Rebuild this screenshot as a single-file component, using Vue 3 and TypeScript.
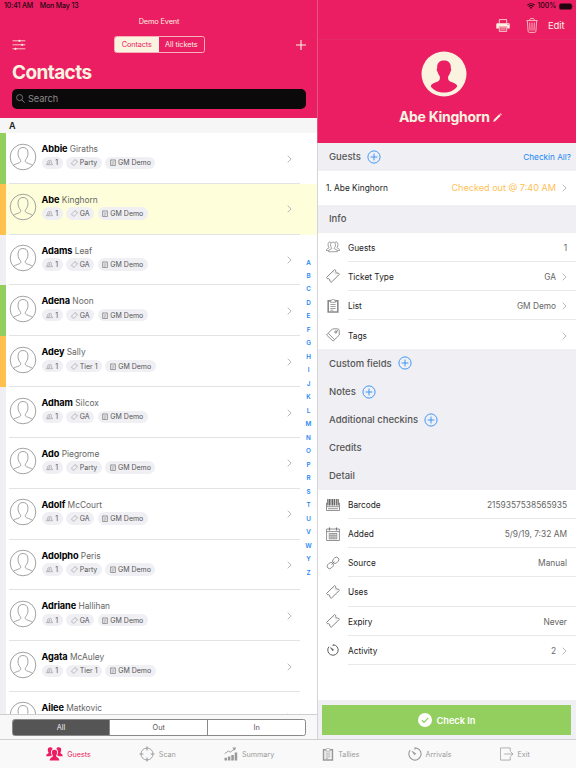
<script setup lang="ts">
interface Guest {
  first: string
  last: string
  ticket?: string
  state?: 'in' | 'out'
  selected?: boolean
}

interface Field {
  icon: string
  label: string
  value?: string
  more?: boolean
}

const guests: Guest[] = [
  { first: 'Abbie', last: 'Giraths', ticket: 'Party', state: 'in' },
  { first: 'Abe', last: 'Kinghorn', ticket: 'GA', state: 'out', selected: true },
  { first: 'Adams', last: 'Leaf', ticket: 'GA' },
  { first: 'Adena', last: 'Noon', ticket: 'GA', state: 'in' },
  { first: 'Adey', last: 'Sally', ticket: 'Tier 1', state: 'out' },
  { first: 'Adham', last: 'Silcox', ticket: 'GA' },
  { first: 'Ado', last: 'Piegrome', ticket: 'Party' },
  { first: 'Adolf', last: 'McCourt', ticket: 'GA' },
  { first: 'Adolpho', last: 'Peris', ticket: 'Party' },
  { first: 'Adriane', last: 'Hallihan', ticket: 'GA' },
  { first: 'Agata', last: 'McAuley', ticket: 'Tier 1' },
  { first: 'Ailee', last: 'Matkovic' },
]

const letters: string[] = 'ABCDEFGHIJKLMNOPRSTUVWYZ'.split('')

const info: Field[] = [
  { icon: 'group', label: 'Guests', value: '1' },
  { icon: 'ticket', label: 'Ticket Type', value: 'GA', more: true },
  { icon: 'clip', label: 'List', value: 'GM Demo', more: true },
  { icon: 'tag', label: 'Tags', more: true },
]

const sections: { title: string; add: boolean }[] = [
  { title: 'Custom fields', add: true },
  { title: 'Notes', add: true },
  { title: 'Additional checkins', add: true },
  { title: 'Credits', add: false },
  { title: 'Detail', add: false },
]

const detail: Field[] = [
  { icon: 'barcode', label: 'Barcode', value: '2159357538565935' },
  { icon: 'calendar', label: 'Added', value: '5/9/19, 7:32 AM' },
  { icon: 'link', label: 'Source', value: 'Manual' },
  { icon: 'ticket', label: 'Uses' },
  { icon: 'ticket', label: 'Expiry', value: 'Never' },
  { icon: 'timer', label: 'Activity', value: '2', more: true },
]

const tabs: { icon: string; label: string; active?: boolean }[] = [
  { icon: 'people', label: 'Guests', active: true },
  { icon: 'scan', label: 'Scan' },
  { icon: 'chart', label: 'Summary' },
  { icon: 'clip', label: 'Tallies' },
  { icon: 'timer', label: 'Arrivals' },
  { icon: 'exit', label: 'Exit' },
]
</script>

<template>
  <div class="screen">
    <svg class="defs" width="0" height="0">
      <symbol id="group" viewBox="0 0 16 14">
        <g fill="none" stroke="currentColor" stroke-width=".8" stroke-linejoin="round">
          <path d="M3 12.400h10c.2-1.800-.5-2.300-3.200-3.100-.5-.2-.4-1 0-1.500.9-1 1.100-2.200 1-3.600C10.700 2.500 9.600 1.500 8 1.500S5.300 2.500 5.200 4.200c-.1 1.400.1 2.600 1 3.600.4.500.5 1.300 0 1.500C3.500 10.100 2.800 10.600 3 12.400z" />
          <path d="M5.800 1.600C3.600.6 2.300 2 2.400 4c0 1.500 0 2.400.7 3.200.5.600.3 1-.4 1.300C1 9.100.5 9.500.5 11H3M10.200 1.600C12.400.6 13.700 2 13.600 4c0 1.500 0 2.400-.7 3.200-.5.600-.3 1 .4 1.300 1.700.6 2.200 1 2.200 2.500H13" />
        </g>
      </symbol>
      <symbol id="pair" viewBox="0 0 16 14">
        <g fill="none" stroke="currentColor" stroke-width="1.200">
          <path d="M5 12h10c0-2-1-2.700-3.500-3.500V7.300c1.700-2.500 1-5.300-1.500-5.300S6.800 4.800 8.500 7.300v1.200C6 9.300 5 10 5 12z" />
          <path d="M6.500 3C4 2.500 3 5 4.500 7.500v1C2 9.300 1 10 1 12h4" />
        </g>
      </symbol>
      <symbol id="people" viewBox="0 0 17 14">
        <g fill="currentColor">
          <path d="M4.300.2C2.400.2 1.600 1.500 1.800 3.200c.1 1.400.7 1.900.7 2.500 0 1.300-2.300.9-2.300 3.600h3.900c.5-.5 1.500-.7 1.900-1C5.100 7 4.600 5.400 5.200 4c.2-1 .8-1.600 1.500-2C6.300.8 5.500.2 4.300.2z" />
          <path d="M12.700.2c1.900 0 2.700 1.300 2.500 3-.1 1.400-.7 1.900-.7 2.500 0 1.300 2.300.9 2.300 3.600h-3.900c-.5-.5-1.500-.7-1.900-1 .9-1.300 1.400-2.900.8-4.300-.2-1-.8-1.600-1.500-2 .4-1.200 1.200-1.800 2.400-1.800z" />
          <path d="M8.500 2.700c-2 0-2.800 1.200-2.600 3 .1 1.700 1 2.300 1 3.300 0 1.300-3.200 1.400-3.200 4.500h9.600c0-3.100-3.200-3.200-3.200-4.500 0-1 .9-1.600 1-3.300.2-1.800-.6-3-2.600-3z" />
        </g>
      </symbol>
      <symbol id="ticket" viewBox="0 0 14 14">
        <path d="M8.700.5 10 1.800a1.500 1.500 0 0 0 2.100 2.100l1.400 1.400-8.400 8.100-1.400-1.400a1.500 1.500 0 0 0-2-2.100L.4 8.600z" fill="none" stroke="currentColor" stroke-width=".9" stroke-linejoin="round" />
        <path d="m7 2.300 4.700 4.700" stroke="currentColor" stroke-width=".5" stroke-dasharray=".7 .9" />
      </symbol>
      <symbol id="clip" viewBox="0 0 12 14">
        <path d="M1.200 1.900h9.600v11.100H1.200z" fill="none" stroke="currentColor" stroke-width="1.600" />
        <path d="M3.500 1.200h1.300a1.200 1.200 0 0 1 2.400 0h1.300v2.100h-5z" fill="#fff" stroke="currentColor" stroke-width=".8" />
        <path d="M3.400 5.500h5.200M3.400 7.500h5.200M3.400 9.500h5.200M3.400 11.200h2.900" stroke="currentColor" stroke-width=".8" />
      </symbol>
      <symbol id="tag" viewBox="0 0 14 14">
        <g fill="none" stroke="currentColor" stroke-width=".8" stroke-linejoin="round">
          <path d="M.5 6.900 6.500.9 11.400.8c1.200 0 1.900.8 1.800 1.900L13.300 7l-6.200 6.100z" />
          <path d="m2.300 5.300 6.100 6.300M12 1.900 9.600 4.200" />
          <circle cx="9.800" cy="4" r="1.100" />
        </g>
      </symbol>
      <symbol id="barcode" viewBox="0 0 14 13">
        <path d="M1.800.5v6.500M3.600.5v6.500M5 .5v6.500M6.600.5v6.500M8.600.5v6.500M10.300.5v6.500M12.200.5v6.500" stroke="#444" stroke-width=".9" />
        <path d="M2.700.5v6.500M7.600.5v6.500M11.300.5v6.500" stroke="#777" stroke-width=".5" />
        <path d="M1.500 4.500H.5v7.500h13V4.500h-1M.5 8.200h13M2 10.200h10" fill="none" stroke="currentColor" stroke-width=".8" />
      </symbol>
      <symbol id="calendar" viewBox="0 0 14 14">
        <path d="M.6 2h12.800v11.500H.6zM.6 4.600h12.800" fill="none" stroke="currentColor" stroke-width=".8" />
        <path d="M3.500.4v3M10.500.4v3" stroke="currentColor" stroke-width="1.200" />
        <path d="M3 6.500h8M3 8.300h8M3 10.100h8M3 11.800h8M3.200 6v6.200M5.100 6v6.200M7 6v6.200M8.900 6v6.200M10.800 6v6.200" stroke="currentColor" stroke-width=".6" />
      </symbol>
      <symbol id="link" viewBox="0 0 14 14">
        <g fill="none" stroke="currentColor" stroke-width=".8">
          <rect x="6.300" y="1.900" width="6.800" height="4.800" rx="2.400" transform="rotate(-45 9.700 4.300)" />
          <rect x=".9" y="7.200" width="6.800" height="4.800" rx="2.400" transform="rotate(-45 4.300 9.600)" />
          <path d="m5.500 8.500 3-3" />
        </g>
      </symbol>
      <symbol id="timer" viewBox="0 0 14 14">
        <path d="M7 2.400V.9A6.100 6.100 0 1 1 2.200 3.200" fill="none" stroke="currentColor" stroke-width="1.100" />
        <path d="M4 4.200 7.800 6.600 6.600 7.900z" fill="currentColor" stroke="currentColor" stroke-width=".6" />
      </symbol>
      <symbol id="scan" viewBox="0 0 16 16">
        <circle cx="8" cy="8" r="6" fill="none" stroke="currentColor" stroke-width=".9" />
        <path d="M8 .4v4M8 11.600v4M.4 8h4M11.600 8h4" stroke="currentColor" stroke-width="1.100" />
      </symbol>
      <symbol id="chart" viewBox="0 0 14 14">
        <path d="M.5 10.800h2.500V13.500H.5zM3.900 9.600h2.500v3.900H3.900zM7.300 8h2.500v5.500H7.300zM10.700 5.500h2.500v8h-2.500z" fill="currentColor" />
        <path d="m.7 6.700 3.600-2.600 2 1 4-3" fill="none" stroke="currentColor" stroke-width=".9" />
        <path d="M8.300.5H12L10.800 3.700z" fill="currentColor" />
      </symbol>
      <symbol id="exit" viewBox="0 0 15 14">
        <path d="M11 4.200V.5H.5v13H11V9.800M4.500 7H14M11.300 4.500 13.900 7l-2.600 2.500" fill="none" stroke="currentColor" stroke-width=".8" />
      </symbol>
      <symbol id="add" viewBox="0 0 14 14">
        <circle cx="7" cy="7" r="6.100" fill="none" stroke="currentColor" stroke-width=".9" />
        <path d="M7 3.600v6.800M3.600 7h6.800" stroke="currentColor" stroke-width=".9" />
      </symbol>
      <symbol id="chev" viewBox="0 0 5 8">
        <path d="m.7.700 3.400 3.300L.7 7.300" fill="none" stroke="currentColor" stroke-width="1" />
      </symbol>
      <symbol id="avatar" viewBox="0 0 28 28">
        <g fill="none" stroke="currentColor" stroke-width=".9">
          <circle cx="14" cy="14" r="12.800" />
          <path d="M4.300 22.500c2-1.900 6.500-2.200 7.300-3.700.4-1.400-.1-2-.9-3-1.500-2-1.800-4.300-1.600-6.700C9.400 6 11.200 4.500 14 4.500s4.600 1.500 4.900 4.600c.2 2.400-.1 4.700-1.600 6.700-.8 1-1.300 1.600-.9 3 .8 1.500 5.300 1.800 7.300 3.700" />
        </g>
      </symbol>
    </svg>

    <div class="panes">
      <section class="left">
        <header class="lhead">
          <div class="status"><span>10:41 AM</span><span>Mon May 13</span></div>
          <div class="event">Demo Event</div>
          <div class="tools">
            <svg class="sliders" viewBox="0 0 14 12">
              <path d="M.5 1.800h12.800M.5 5.800h12.800M.5 9.800h12.800" stroke="currentColor" stroke-width=".8" />
              <circle cx="7.500" cy="1.800" r="1.100" fill="currentColor" />
              <circle cx="10.200" cy="5.800" r="1.100" fill="currentColor" />
              <circle cx="3.500" cy="9.800" r="1.100" fill="currentColor" />
            </svg>
            <div class="seg"><span class="on">Contacts</span><span>All tickets</span></div>
            <svg class="plus" viewBox="0 0 10 10"><path d="M5 0v10M0 5h10" stroke="currentColor" stroke-width="1.100" /></svg>
          </div>
          <h1>Contacts</h1>
          <div class="search">
            <svg viewBox="0 0 9 9"><path d="m5.800 5.800 2.800 2.800" stroke="currentColor" stroke-width=".9" /><circle cx="3.600" cy="3.600" r="3" fill="none" stroke="currentColor" stroke-width=".8" /></svg>
            <span>Search</span>
          </div>
        </header>
        <div class="letter">A</div>
        <div class="list">
          <article v-for="g in guests" :key="g.first" class="guest" :class="[g.state, { selected: g.selected }]">
            <svg class="avatar"><use href="#avatar" /></svg>
            <div class="who">
              <div class="name"><b>{{ g.first }}</b> {{ g.last }}</div>
              <div v-if="g.ticket" class="chips">
                <span class="chip"><svg><use href="#pair" /></svg>1</span>
                <span class="chip"><svg><use href="#ticket" /></svg>{{ g.ticket }}</span>
                <span class="chip"><svg class="note"><use href="#clip" /></svg>GM Demo</span>
              </div>
            </div>
            <svg class="chev"><use href="#chev" /></svg>
          </article>
          <nav class="index"><span v-for="l in letters" :key="l">{{ l }}</span></nav>
        </div>
        <div class="filter">
          <div class="filterseg"><span class="on">All</span><span>Out</span><span>In</span></div>
        </div>
      </section>

      <section class="right">
        <header class="rhead">
          <div class="status rstatus">
            <svg class="wifi" viewBox="0 0 8 6"><g fill="none" stroke="#22060f" stroke-width="1.100"><path d="M.4 2.200a5.200 5.200 0 0 1 7.200 0M1.700 3.600a3.300 3.300 0 0 1 4.600 0" /></g><path d="M2.800 4.600a1.700 1.700 0 0 1 2.400 0L4 5.900z" fill="#22060f" /></svg>
            <span>100%</span>
            <svg class="battery" viewBox="0 0 15 7"><rect x=".3" y=".5" width="12.500" height="6" rx="1.500" fill="#22060f" /><path d="M13.600 2.500v2c.8-.4.8-1.600 0-2z" fill="#22060f" /></svg>
          </div>
          <div class="actions">
            <svg class="printer" viewBox="0 0 14 13">
              <path d="M3.300 4V.6h7.400V4" fill="none" stroke="currentColor" stroke-width=".8" />
              <path d="M1.500 4.200h11c.7 0 1.200.5 1.200 1.200v4.200h-2.500V7.500H2.800v2.100H.3V5.400c0-.7.500-1.200 1.200-1.200z" fill="currentColor" />
              <circle cx="12" cy="5.600" r=".5" fill="#eb1e63" />
              <path d="M3.300 8v4.400h7.400V8z" fill="none" stroke="currentColor" stroke-width=".8" />
              <path d="M4.300 9.200h5.400M4.300 10.800h5.400" stroke="currentColor" stroke-width=".6" />
            </svg>
            <svg class="trash" viewBox="0 0 12 15"><g fill="none" stroke="currentColor" stroke-width=".7"><path d="M.4 2.600h11.200M3.700 2.500C3.700 1 4 .6 5 .6h2c1 0 1.300.4 1.300 1.900M1.300 2.800l.8 10.400c.1.800.4 1.200 1.200 1.200h5.400c.8 0 1.100-.4 1.200-1.200l.8-10.400" /><path d="m3.700 4.600.3 8M6 4.600v8M8.300 4.600l-.3 8" /></g></svg>
            <span>Edit</span>
          </div>
          <div class="profile">
            <svg class="big" viewBox="0 0 46 46">
              <circle cx="23" cy="23" r="22.500" fill="#f9f3e0" />
              <path d="M23 9.500c-4.600 0-7 2.700-6.800 7 0 1.200-.6 1.200-.4 2.500.1 1.200.8 1.500 1 2.400.3 1.600 1.300 2.700 2 3.800.6 2.700-.3 4.600-2.600 5.600-2.800 1.200-5.800 1.600-6.400 4.600C13 39.800 17.800 41.500 23 41.500s10-1.700 13.200-6.100c-.6-3-3.600-3.400-6.400-4.600-2.300-1-3.200-2.900-2.600-5.600.7-1.100 1.700-2.200 2-3.800.2-.9.900-1.200 1-2.400.2-1.300-.4-1.300-.4-2.500.2-4.300-2.200-7-6.800-7z" fill="#eb1e63" />
            </svg>
            <div class="fullname">
              <span>Abe Kinghorn</span>
              <svg viewBox="0 0 10 10"><path d="M.2 9.800.9 7.500 6.900 1.500l1.600 1.600L2.500 9.100zM7.500.900l.7-.7 1.600 1.600-.7.700z" fill="currentColor" /></svg>
            </div>
          </div>
        </header>

        <div class="sect"><span>Guests</span><svg class="addi"><use href="#add" /></svg><a>Checkin All?</a></div>
        <div class="visit"><span>1. Abe Kinghorn</span><em>Checked out @ 7:40 AM</em><svg class="chev"><use href="#chev" /></svg></div>
        <div class="sect">Info</div>
        <div class="fields">
          <div v-for="f in info" :key="f.label" class="field">
            <svg class="ico" :class="f.icon"><use :href="'#' + f.icon" /></svg>
            <div class="body"><span>{{ f.label }}</span><span class="val">{{ f.value }}</span><svg v-if="f.more" class="chev"><use href="#chev" /></svg></div>
          </div>
        </div>
        <div v-for="s in sections" :key="s.title" class="sect"><span>{{ s.title }}</span><svg v-if="s.add" class="addi"><use href="#add" /></svg></div>
        <div class="fields last">
          <div v-for="f in detail" :key="f.label" class="field">
            <svg class="ico" :class="f.icon"><use :href="'#' + f.icon" /></svg>
            <div class="body"><span>{{ f.label }}</span><span class="val">{{ f.value }}</span><svg v-if="f.more" class="chev"><use href="#chev" /></svg></div>
          </div>
        </div>
        <div class="checkin">
          <button>
            <svg viewBox="0 0 14 14"><circle cx="7" cy="7" r="7" fill="#fff" /><path d="m3.800 7.200 2.200 2.200 4.200-4.500" fill="none" stroke="#93cf5e" stroke-width="1.300" /></svg>
            Check In
          </button>
        </div>
      </section>
    </div>

    <footer class="tabs">
      <div v-for="t in tabs" :key="t.label" class="tab" :class="[t.icon, { active: t.active }]">
        <svg><use :href="'#' + t.icon" /></svg><span>{{ t.label }}</span>
      </div>
    </footer>
  </div>
</template>

<style>
body { margin: 0; overflow: hidden; }
</style>

<style scoped>
* { box-sizing: border-box; }
.screen { width: 576px; height: 768px; display: flex; flex-direction: column; overflow: hidden; background: #fff; font-family: Inter, "Liberation Sans", sans-serif; color: #222; white-space: nowrap; }
.defs { position: absolute; }
svg { flex: none; display: block; }
.panes { display: flex; height: 739px; }
.left { width: 317px; height: 739px; display: flex; flex-direction: column; }
.right { width: 259px; height: 739px; display: flex; flex-direction: column; border-left: 1px solid #d5d3d8; }

.lhead { height: 117.500px; background: #eb1e63; color: #f9f3e0; padding: 0 11px 0 12px; }
.status { display: flex; gap: 6.500px; height: 12px; line-height: 12px; margin-left: -8px; font-size: 7px; font-weight: 500; letter-spacing: -.12px; color: #22060f; }
.event { text-align: center; font-size: 7.300px; line-height: 10px; margin-top: 4.500px; letter-spacing: -.1px; }
.tools { display: flex; align-items: center; height: 17px; margin-top: 9.500px; }
.sliders { width: 14px; height: 12px; }
.plus { width: 10px; height: 10px; margin-left: auto; }
.seg { display: flex; width: 91px; height: 17px; margin-left: 87.500px; border: 1px solid #f5b0b8; border-radius: 2.500px; font-size: 7.300px; line-height: 15px; overflow: hidden; letter-spacing: -.08px; }
.seg span { flex: 1; text-align: center; }
.seg .on { background: #f9f3e0; color: #eb1e63; }
h1 { margin: 6px 0 0; font-size: 19px; line-height: 28px; font-weight: 700; letter-spacing: -.6px; }
.search { display: flex; align-items: center; gap: 3.500px; height: 20.500px; margin-top: 1.500px; padding-left: 3.500px; border-radius: 5px; background: #0b090a; color: #8c8a8b; font-size: 9.200px; letter-spacing: -.05px; }
.search svg { width: 9px; height: 9px; }
.letter { flex: none; height: 15.500px; padding: 2px 0 0 9px; background: #f6f6f6; font-size: 9px; line-height: 12px; font-weight: 600; }
.list { position: relative; flex: 1; overflow: hidden; }
.guest { position: relative; display: flex; height: 50.820px; border-left: 6px solid #efeff4; padding: 9.500px 25px 0 3px; }
.guest::after { content: ""; position: absolute; left: 3px; right: 17px; bottom: 0; height: 1px; background: #e3e3e6; }
.guest.in { border-left-color: #93cf5e; }
.guest.out { border-left-color: #ffc04d; }
.guest.selected { background: #fefeda; }
.avatar { width: 28px; height: 28px; color: #999; }
.who { flex: 1; padding: .5px 0 0 4.500px; }
.name { font-size: 8.400px; line-height: 12px; color: #666; }
.name b { font-size: 9.200px; font-weight: 700; letter-spacing: -.1px; color: #000; }
.chips { display: flex; gap: 3.500px; margin-top: 1.500px; }
.chip { display: flex; align-items: center; gap: 2.200px; height: 12.500px; padding: 0 4.500px; border-radius: 7px; background: #efeff4; color: #555; font-size: 7px; }
.chip svg { width: 7px; height: 7px; color: #888; }
.chip .note { width: 6px; }
.chev { width: 5px; height: 8px; color: #b8b8bc; }
.guest > .chev { margin-top: 12px; }
.index { position: absolute; right: 3px; top: 123.500px; width: 11px; display: flex; flex-direction: column; text-align: center; color: #1e88f5; font-size: 6.300px; font-weight: 600; line-height: 13.480px; }
.filter { flex: none; height: 25px; padding: 4px 11px 0 11.500px; background: #f8f8f8; border-top: 1px solid #cfcfd1; }
.filterseg { display: flex; height: 17px; border: 1px solid #8a8a8a; border-radius: 2.500px; overflow: hidden; background: #fff; color: #555; font-size: 7.300px; line-height: 15px; text-align: center; }
.filterseg span { flex: 1; }
.filterseg span + span { border-left: 1px solid #8a8a8a; }
.filterseg .on { background: #555; color: #eee; }

.rhead { height: 142.500px; flex: none; margin-left: -1px; border-left: 1px solid #e0577f; background: #eb1e63; color: #f9f3e0; }
.rstatus { justify-content: flex-end; align-items: center; gap: 2.500px; margin: 0; padding-right: 2.500px; }
.wifi { width: 8px; height: 6px; }
.battery { width: 15px; height: 7px; }
.actions { display: flex; align-items: center; justify-content: flex-end; height: 28px; padding-right: 11.500px; border-bottom: 1px solid #e32a66; font-size: 9.500px; letter-spacing: -.1px; }
.printer { width: 14px; height: 13px; margin-right: 16px; }
.trash { width: 12px; height: 15px; margin-right: 9.500px; }
.profile { display: flex; flex-direction: column; align-items: center; padding-top: 11px; }
.big { width: 46px; height: 46px; margin-right: 6px; }
.fullname { display: flex; align-items: center; gap: 3.500px; margin-top: 11px; margin-left: 7px; font-size: 14px; line-height: 18px; font-weight: 700; letter-spacing: -.3px; }
.fullname svg { width: 9px; height: 9px; }
.sect { display: flex; align-items: center; flex: none; height: 28.100px; padding: 0 5px 0 11px; background: #efeff4; color: #555; font-size: 9.500px; font-weight: 500; }
.addi { width: 14px; height: 14px; margin-left: 6px; color: #2f8ff7; }
.sect a { margin-left: auto; font-size: 8.200px; font-weight: 400; color: #2086f5; }
.visit { display: flex; align-items: center; flex: none; height: 34px; padding: 0 9px 0 8px; font-size: 8.300px; }
.visit em { margin-left: auto; margin-right: 6px; font-style: normal; font-size: 9.100px; color: #ffc155; }
.fields { flex: none; }
.field { display: flex; align-items: center; height: 29.200px; padding-left: 8px; }
.ico { width: 14px; height: 14px; margin-right: 8px; color: #777; }
.ico.clip { color: #8a8a8a; }
.ico.timer { height: 12px; color: #555; }
.body { display: flex; align-items: center; flex: 1; height: 100%; padding: 1.500px 9px 0 0; border-bottom: 1px solid #e8e8ea; font-size: 8.300px; }
.fields:not(.last) .field:last-child .body { border-bottom: 0; }
.val { margin-left: auto; color: #666; }
.last .val { font-size: 8.400px; }
.val + .chev { margin-left: 6px; }
.checkin { margin-top: auto; height: 39px; padding: 5px 5px 4px 4px; background: #efeff4; }
.checkin button { display: flex; align-items: center; justify-content: center; gap: 5px; width: 100%; height: 30px; padding: 0; border: 0; background: #93cf5e; color: #fff; font: 600 9.200px Inter, sans-serif; }
.checkin svg { width: 14px; height: 14px; }

.tabs { display: flex; justify-content: center; gap: 48px; height: 29px; border-top: 1px solid #d0d0d2; background: #f9f9f9; color: #999; font-size: 7.200px; }
.tab { display: flex; align-items: center; gap: 4px; }
.tab svg { width: 14px; height: 14px; }
.tab.active { color: #eb1e63; }
.tab.people svg { width: 17px; }
.tab.scan svg { width: 16px; height: 16px; }
.tab.clip svg { width: 12px; height: 13px; }
</style>
